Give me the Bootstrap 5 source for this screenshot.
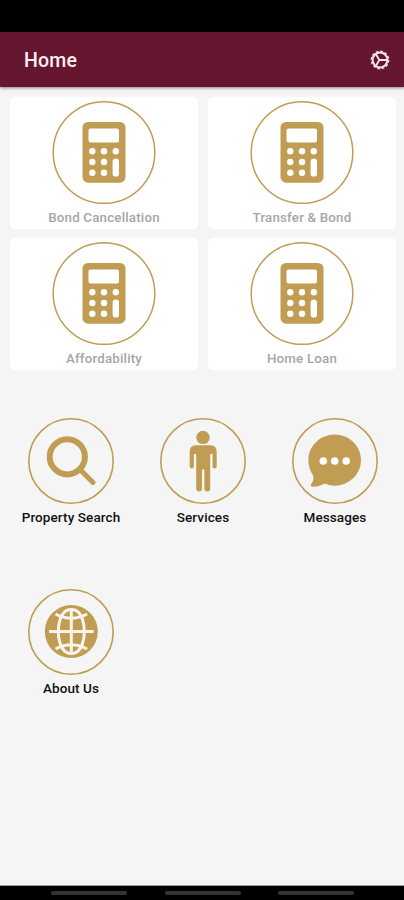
<!DOCTYPE html>
<html lang="en">
<head>
<meta charset="utf-8">
<meta name="viewport" content="width=device-width, initial-scale=1">
<title>Home</title>
<link href="https://cdn.jsdelivr.net/npm/bootstrap@5.3.0/dist/css/bootstrap.min.css" rel="stylesheet">
<style>
body{font-family:Roboto,"Liberation Sans",sans-serif;background:#f5f5f5;height:900px;overflow:hidden}
.status-strip{height:32px;background:#000}
.app-bar{height:55px;background:#66172f;padding:0 14px 0 24px;box-shadow:0 1px 3px rgba(0,0,0,.45)}
.app-title{font-size:19.5px;font-weight:500;line-height:24px;color:#fbeff2;letter-spacing:.2px;padding-top:2px}
.calc-grid{padding:10px 8px 0 10px;display:grid;grid-template-columns:188px 188px;gap:9px 10px}
.calc-tile{height:132px;border-radius:5px;padding-top:3px}
.calc-label{font-size:13.3px;line-height:16px;font-weight:500;color:#a6a6a6;letter-spacing:.2px;margin-top:6px}
.menu-grid{padding:47px 3px 0 5px}
.menu-item{height:171px}
.menu-label{font-size:13.5px;line-height:16px;font-weight:500;color:#111;letter-spacing:.1px;margin-top:4px}
.nav-strip{height:14px;background:#000;box-shadow:0 -1px 0 #999;padding:5px 50px 0 51px}
.nav-pill{width:76px;height:4px;border-radius:2px;background:#333}
svg{display:block}
</style>
<script src="https://cdn.jsdelivr.net/npm/bootstrap@5.3.0/dist/js/bootstrap.bundle.min.js"></script>
</head>
<body class="d-flex flex-column m-0">
<svg width="0" height="0" class="d-none" aria-hidden="true">
<symbol id="calc" viewBox="0 0 104 104">
<circle cx="52" cy="52.5" r="50.8" fill="none" stroke="#c09d52" stroke-width="1.5"/>
<rect x="30.5" y="22" width="43" height="60.7" rx="5.5" fill="#c09d52"/>
<g fill="#fff"><rect x="36.5" y="28.4" width="30.5" height="14" rx="2"/>
<circle cx="40.3" cy="51.3" r="3.2"/><circle cx="52" cy="51.3" r="3.2"/><circle cx="63.8" cy="51.3" r="3.2"/>
<circle cx="40.3" cy="62" r="3.2"/><circle cx="52" cy="62" r="3.2"/>
<circle cx="40.3" cy="72.8" r="3.2"/><circle cx="52" cy="72.8" r="3.2"/>
<rect x="60.6" y="58.6" width="6.4" height="18" rx="3.2"/></g>
</symbol>
</svg>
<div class="status-strip flex-shrink-0"></div>
<header class="app-bar d-flex align-items-center justify-content-between flex-shrink-0">
<h1 class="app-title m-0">Home</h1>
<svg width="20" height="20" viewBox="0 0 20 20" fill="none" stroke="#f6e6ea" aria-label="Settings">
<circle cx="10" cy="10" r="7.4" stroke-width="2"/>
<circle cx="10" cy="10" r="8.8" stroke-width="1.2" stroke-dasharray="2.6 2.007"/>
<path d="M9.3 10H17M9.3 10L6 4.2M9.3 10L6 15.8" stroke-width="1.8"/>
</svg>
</header>
<main class="flex-grow-1">
<section class="calc-grid">
<div class="calc-tile bg-white d-flex flex-column align-items-center"><svg width="104" height="104"><use href="#calc"/></svg><div class="calc-label">Bond Cancellation</div></div>
<div class="calc-tile bg-white d-flex flex-column align-items-center"><svg width="104" height="104"><use href="#calc"/></svg><div class="calc-label">Transfer &amp; Bond</div></div>
<div class="calc-tile bg-white d-flex flex-column align-items-center"><svg width="104" height="104"><use href="#calc"/></svg><div class="calc-label">Affordability</div></div>
<div class="calc-tile bg-white d-flex flex-column align-items-center"><svg width="104" height="104"><use href="#calc"/></svg><div class="calc-label">Home Loan</div></div>
</section>
<section class="menu-grid">
<div class="row g-0">
<div class="col-4 menu-item d-flex flex-column align-items-center">
<svg width="88" height="88" fill="none" stroke="#c09d52"><circle cx="44" cy="44" r="42.2" stroke-width="1.6"/><circle cx="40.3" cy="39.8" r="17.6" stroke-width="6"/><path d="M53 52.5L66 65.5" stroke-width="5" stroke-linecap="round"/></svg>
<div class="menu-label">Property Search</div></div>
<div class="col-4 menu-item d-flex flex-column align-items-center">
<svg width="88" height="88" fill="#c09d52"><circle cx="44" cy="44" r="42.2" fill="none" stroke="#c09d52" stroke-width="1.6"/><circle cx="44" cy="20.4" r="6.7"/>
<path d="M36.5 28.3H51.5Q57.7 28.3 57.7 35V49.5A2.1 2.1 0 0 1 53.5 49.5V37H51.2V71.5A2.9 2.9 0 0 1 45.4 71.5V52.5H43V71.5A2.9 2.9 0 0 1 37.2 71.5V37H34.9V49.5A2.1 2.1 0 0 1 30.7 49.5V35Q30.7 28.3 36.5 28.3Z"/></svg>
<div class="menu-label">Services</div></div>
<div class="col-4 menu-item d-flex flex-column align-items-center">
<svg width="88" height="88" fill="#c09d52"><circle cx="44" cy="44" r="42.2" fill="none" stroke="#c09d52" stroke-width="1.6"/>
<path d="M43.7 17.5C58 17.5 70 28.7 70 43S58 68.7 43.7 68.7C39.5 68.7 36.7 67.8 33.5 66.6C30.5 68.3 26.5 70 21.8 69.8C19.7 69.6 19.3 68 20.6 66.5C22.6 64 23 61 21.8 57.8C19.2 54 17.4 49.2 17.4 43C17.4 28.7 29.4 17.5 43.7 17.5Z"/>
<g fill="#fff"><circle cx="32.3" cy="44" r="3.8"/><circle cx="43.7" cy="44" r="3.8"/><circle cx="55.2" cy="44" r="3.8"/></g></svg>
<div class="menu-label">Messages</div></div>
<div class="col-4 menu-item d-flex flex-column align-items-center">
<svg width="88" height="88" fill="none" stroke="#f8f5ed" stroke-width="3"><circle cx="44" cy="44" r="42.2" stroke="#c09d52" stroke-width="1.6"/><circle cx="44.3" cy="43.5" r="26.5" fill="#c09d52" stroke="none"/>
<path d="M39.5 22.5C28.5 29 28.5 58 39.5 64.5Q44.3 66.5 49.1 64.5C60.1 58 60.1 29 49.1 22.5Q44.3 20.5 39.5 22.5Z"/><path d="M44.3 21V66M22 43.5H66.6M28.5 26Q44.3 34.5 60.1 26M28.5 61Q44.3 52.5 60.1 61"/></svg>
<div class="menu-label">About Us</div></div>
</div>
</section>
</main>
<footer class="nav-strip d-flex justify-content-between flex-shrink-0"><span class="nav-pill"></span><span class="nav-pill"></span><span class="nav-pill"></span></footer>
</body>
</html>
